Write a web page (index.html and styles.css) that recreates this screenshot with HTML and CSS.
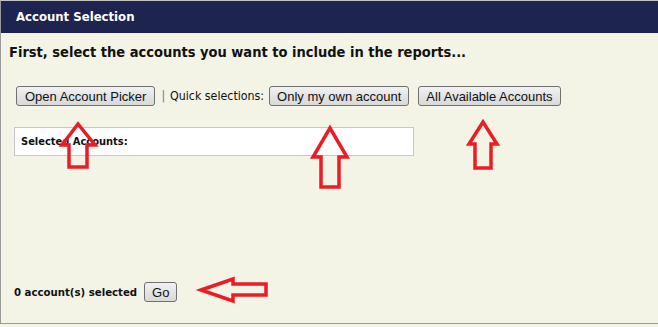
FILE: index.html
```html
<!DOCTYPE html>
<html lang="en">
<head>
    <meta charset="UTF-8">
    <title>Account Selection</title>
    <link rel="stylesheet" href="styles.css">
</head>
<body>
    <div class="panel">
        <div class="panel-header">Account Selection</div>
        <div class="panel-body">
            <h2>First, select the accounts you want to include in the reports...</h2>

            <div class="quick-row">
                <button type="button">Open Account Picker</button>
                <span class="sep">|</span>
                <span class="quick-label">Quick selections:</span>
                <button type="button">Only my own account</button>
                <button type="button" class="all-btn">All Available Accounts</button>
            </div>

            <div class="selected-box">Selected Accounts:</div>

            <div class="footer">
                <span class="count">0 account(s) selected</span>
                <button type="button">Go</button>
            </div>
        </div>

        <!-- annotation arrows drawn over the screenshot -->
        <svg class="arrows" width="658" height="327" viewBox="0 0 658 327">
            <g fill="none" stroke="#ec1c24" stroke-width="3.5" stroke-linejoin="miter">
                <polygon points="78,124 62,145 69,145 69,167 87,167 87,145 95,145"/>
                <polygon points="330,128 313,157 321,157 321,187 339,187 339,157 347,157"/>
                <polygon points="483,122 469,144 475,144 475,168 491,168 491,144 497,144"/>
                <polygon points="201,290 233,279 233,284 266,284 266,295 233,295 233,301"/>
            </g>
        </svg>
    </div>
</body>
</html>
```

FILE: styles.css
```css
* {
    box-sizing: border-box;
}

body {
    margin: 0;
    background-color: #f3f3e6;
    font-family: "DejaVu Sans Condensed", "DejaVu Sans", sans-serif;
    color: #111;
}

.panel {
    position: relative;
    height: 324px;
    border-top: 1px solid #c4c4c4;
    border-left: 1px solid #9a9a9a;
    border-bottom: 1px solid #9a9a9a;
    display: flex;
    flex-direction: column;
}

.panel-header {
    height: 32px;
    line-height: 32px;
    padding-left: 15px;
    background-color: #1e2450;
    color: white;
    font-size: 13px;
    font-weight: bold;
}

.panel-body {
    flex: 1;
    display: flex;
    flex-direction: column;
    padding: 0 0 21px 13px;
}

h2 {
    margin: 9px 0 0 -5px;
    font-size: 14.5px;
    font-weight: bold;
    line-height: 20px;
}

.quick-row {
    display: flex;
    align-items: center;
    margin-top: 24px;
    padding-left: 2px;
    font-size: 12px;
}

button {
    height: 20px;
    padding: 0 7px;
    border: 1px solid #707070;
    border-radius: 3px;
    background: linear-gradient(#f2f2f2, #e4e4e4 50%, #d9d9d9);
    font-family: "Liberation Sans", Arial, sans-serif;
    font-size: 13px;
    color: #111;
}

.quick-row button:first-child {
    padding: 0 8px;
}

.sep {
    color: #3b7fc4;
    margin: 0 5px 0 6px;
}

.quick-label {
    font-size: 12.3px;
    margin-right: 5px;
}

.all-btn {
    margin-left: 9px;
}

.selected-box {
    width: 400px;
    height: 29px;
    margin-top: 21px;
    padding: 0 6px;
    line-height: 27px;
    background-color: white;
    border: 1px solid #c8c8c8;
    font-size: 11px;
    font-weight: bold;
}

.footer {
    margin-top: auto;
    display: flex;
    align-items: center;
    gap: 7px;
}

.count {
    font-size: 11.3px;
    font-weight: bold;
}

.arrows {
    position: absolute;
    top: -1px;
    left: -1px;
    pointer-events: none;
}
```
